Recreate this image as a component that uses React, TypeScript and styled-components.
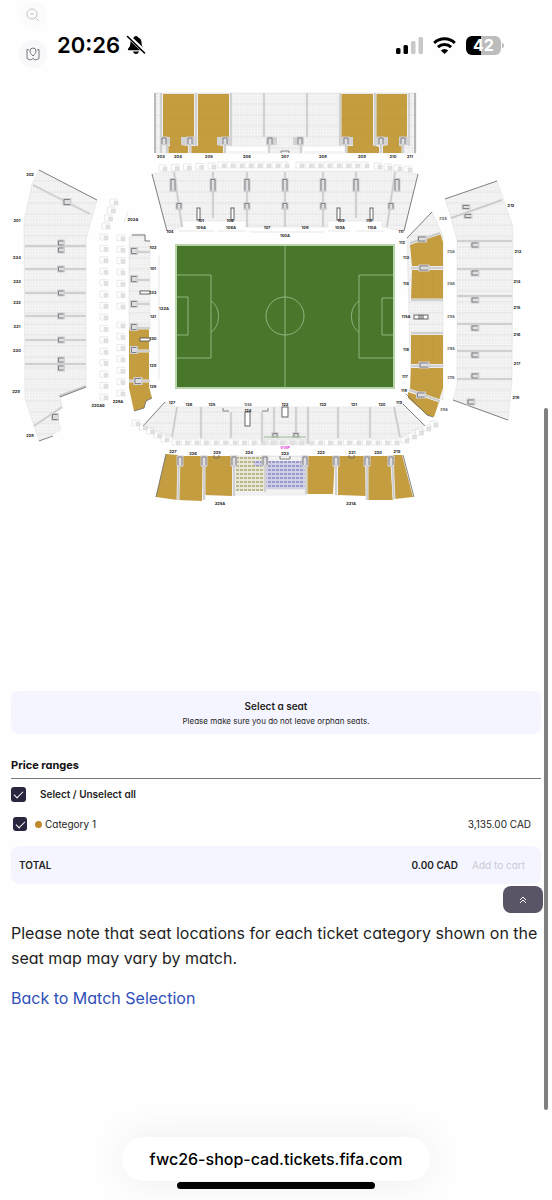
import React from "react";
import styled, { createGlobalStyle } from "styled-components";

const GlobalStyle = createGlobalStyle`
  * { box-sizing: border-box; }
  body {
    margin: 0;
    background: #fefefe;
    color: #1f1f24;
    font-family: Inter, "Liberation Sans", sans-serif;
    font-feature-settings: "cv11";
  }
`;

const Page = styled.div`
  min-height: 100vh;
  display: flex;
  flex-direction: column;
`;

const TopBar = styled.header`
  display: flex;
  align-items: flex-start;
  height: 80px;
  padding: 0 48px 0 19px;
`;

const MapTools = styled.div`
  display: flex;
  flex-direction: column;
  gap: 11px;
  width: 38px;
  padding-top: 1px;
`;

const ToolButton = styled.button<{ $faded?: boolean }>`
  display: grid;
  place-items: center;
  width: 28px;
  height: 28px;
  padding: 0;
  border: 0;
  border-radius: 50%;
  background: ${(p) => (p.$faded ? "#fbfbfb" : "#f8f8fb")};
  color: ${(p) => (p.$faded ? "#c4c4c6" : "#77777e")};
`;

const StatusBar = styled.div`
  flex: 1;
  display: flex;
  align-items: center;
  gap: 6px;
  padding-top: 31px;
  color: #000;
`;

const Clock = styled.time`
  font-size: 22px;
  line-height: 28px;
  font-weight: 600;
`;

const StatusIcons = styled.div`
  display: flex;
  align-items: center;
  gap: 10px;
  margin-left: auto;
`;

const Battery = styled.div`
  display: flex;
  align-items: center;
  gap: 1px;
`;

const BatteryBody = styled.div`
  width: 35px;
  height: 19px;
  border-radius: 6px;
  background: linear-gradient(90deg, #000 42%, #bcbcbc 42%);
  color: #fff;
  font-size: 16px;
  line-height: 19px;
  font-weight: 700;
  text-align: center;
`;

const BatteryTip = styled.div`
  width: 2px;
  height: 5px;
  border-radius: 0 2px 2px 0;
  background: #bcbcbc;
`;

const MapArea = styled.section`
  padding-bottom: 171px;
`;

const MapDrawing = styled.svg`
  display: block;
  width: 100%;
  height: auto;
  font-family: Inter, sans-serif;
  font-weight: 700;
  text-anchor: middle;
`;

const Content = styled.main`
  display: flex;
  flex-direction: column;
  padding: 0 11px;
`;

const Notice = styled.section`
  padding: 7px 12px 6px;
  border-radius: 8px;
  background: #f5f5ff;
  text-align: center;
`;

const NoticeTitle = styled.h2`
  margin: 0;
  font-size: 10px;
  line-height: 16px;
  font-weight: 600;
`;

const NoticeText = styled.p`
  margin: 0;
  font-size: 8px;
  line-height: 14px;
`;

const SectionTitle = styled.h2`
  margin: 22px 0 0;
  padding-bottom: 4px;
  border-bottom: 1px solid #77777a;
  font-size: 11px;
  line-height: 18px;
  font-weight: 700;
  color: #111;
`;

const OptionRow = styled.div<{ $nested?: boolean }>`
  display: flex;
  align-items: center;
  height: 30px;
  padding: ${(p) => (p.$nested ? "0 10px 0 2px" : "0")};
  font-size: 10px;
`;

const Check = styled.input<{ $size: number }>`
  appearance: none;
  flex: none;
  width: ${(p) => p.$size}px;
  height: ${(p) => p.$size}px;
  margin: 0;
  border-radius: 3px;
  background: #2b2640;
  display: grid;
  place-items: center;

  &:checked::after {
    content: "";
    width: 8px;
    height: 4px;
    border: solid #fff;
    border-width: 0 0 1px 1px;
    transform: translateY(-1px) rotate(-45deg);
  }
`;

const AllLabel = styled.label`
  margin-left: 14px;
  font-weight: 600;
`;

const CategoryLabel = styled.label`
  display: flex;
  align-items: center;
  gap: 3px;
  margin-left: 8px;
`;

const Dot = styled.span`
  width: 7px;
  height: 7px;
  border-radius: 50%;
  background: #bd8b2c;
`;

const Price = styled.span`
  margin-left: auto;
`;

const TotalBar = styled.section`
  display: flex;
  align-items: center;
  height: 38px;
  margin-top: 7px;
  padding: 0 16px 0 8px;
  border-radius: 8px;
  background: #f5f5ff;
  font-size: 10px;
  font-weight: 600;
`;

const CartButton = styled.button`
  margin-left: 14px;
  padding: 0;
  border: 0;
  background: none;
  font: inherit;
  font-feature-settings: inherit;
  font-weight: 400;
  color: #c9c9d4;
`;

const TopButton = styled.button`
  align-self: flex-end;
  display: grid;
  place-items: center;
  width: 40px;
  height: 27px;
  margin: 2px -2px 0 0;
  padding: 0;
  border: 0;
  border-radius: 8px;
  background: #595466;
  color: #fff;
`;

const Note = styled.p`
  margin: 8px 0 0;
  font-size: 16px;
  line-height: 25px;
`;

const BackLink = styled.a`
  align-self: flex-start;
  margin-top: 15px;
  font-size: 16px;
  line-height: 25px;
  color: #2f4fb8;
  text-decoration: none;
`;

const BrowserBar = styled.footer`
  display: flex;
  flex-direction: column;
  align-items: center;
  gap: 1px;
  margin-top: auto;
  padding-bottom: 11px;
`;

const Address = styled.div`
  padding: 0 28px;
  border-radius: 22px;
  background: #fff;
  box-shadow: 0 0 40px rgba(0, 0, 0, 0.07);
  font-size: 16px;
  line-height: 44px;
  font-weight: 500;
  font-feature-settings: normal;
  color: #000;
`;

const HomeIndicator = styled.div`
  position: relative;
  width: 198px;
  height: 7px;
  border-radius: 4px;
  background: #000;
`;

const ScrollThumb = styled.div`
  position: fixed;
  top: 34%;
  right: 4px;
  width: 4px;
  height: 58.5%;
  border-radius: 2px;
  background: #808080;
`;

const GOLD = "#c59d41";

type Point = [number, number];
type Box = [number, number, number, number];

/* Stands whose seats are not on sale. */
const emptyStands = [
  "155,93 416,93 416,153 155,153",
  "152,174 175,171 395,171 418,174 404,231 382,227 382,221 328,221 328,227 247,227 247,221 182,221 182,227 167,231",
  "39,170 97,200 89,228 86,240 86,386 60,397 62,406 55,411 61,430 39,441 25,398 24,222 26,212 32,184",
  "132,234 145,234 146,241 150,241 150,329 129,329 129,238",
  "407,238 432,212 443,236 443,400 411,390",
  "445,199 497,181 513,227 512,379 508,420 453,400 457,385 457,240 451,218",
  "144,425 165,402 177,407 394,407 403,404 425,425 400,438 307,438 307,444 262,444 262,438 172,438",
  "233,456 307,456 307,495 233,495",
];

const goldSections = [
  "163,94 194,94 194,137 181,137 181,145 188,146 188,153 168,153 168,146 170,146 170,137 163,137",
  "198,94 229,94 229,137 217,137 217,145 223,146 223,153 191,153 191,146 198,146",
  "341,94 373,94 373,145 379,147 379,153 347,153 347,146 353,146 353,137 341,137",
  "376,94 407,94 407,137 399,137 399,146 402,146 402,153 383,153 383,146 388,145 388,137 376,137",
  "129,329 149,329 149,387 152,398 146,401 144,408 134,411 129,388",
  "410,245 440,233 443,242 443,266 412,266",
  "412,270 443,270 443,299 411,299",
  "411,335 443,335 443,364 411,364",
  "411,368 443,368 443,388 439,400 410,389",
  "408,392 439,402 434,417 427,415 408,398",
  "166,454 178,455 177,500 156,497",
  "180,456 203,456 202,501 178,500",
  "205,456 232,456 232,496 205,495",
  "307,456 335,456 333,494 306,494",
  "338,456 365,456 366,496 338,495",
  "368,456 390,456 393,500 368,500",
  "393,455 402,455 413,497 395,499",
];

const aisles = [
  "M161 93V153M196 93V146M231 93V146M264 93V137M307 93V137M340 93V146M375 93V146M409 93V146",
  "M167 145V153M190 145V153M225 145V153M269 145V153M301 145V153M346 145V153M381 145V153M403 145V153",
  "M213 172V218M247 172V227M285 172V227M323 172V227M356 172V218M174 172L182 227M395 172L387 227",
  "M25 246H86M25 269H86M25 293H86M25 316H86M25 340H86M25 364H86M33 185L90 214M59 396L86 386M34 426L62 407",
  "M134 252H150M134 280H150M134 304H150M129 328H150M134 351H150M129 381H150",
  "M410 243L440 233M411 268H443M411 300H443M411 333H443M411 366H443M409 390L440 401",
  "M457 241H512M457 269H512M457 296H512M457 324H512M457 351H512M457 379H512M451 218L502 200",
  "M177 407L172 437M201 407V438M231 412V438M262 412V444M274 407V437M296 407V437M308 407V444M338 407V438M370 407V438M394 407L400 437",
  "M179 456L178 500M204 456V500M234 456V496M265 456V492M306 456V494M336 456V495M367 456V500M392 456L394 499",
];

const outlines = [
  "M155 93V153M415 93V153",
  "M152 174L167 231M418 174L404 231",
  "M39 170L97 200M39 441L53 436M60 397L86 387",
  "M132 235H145V241H150M134 411L144 408L146 401L152 398",
  "M407 238L432 212M406 394L427 415L433 417",
  "M445 199L497 181M453 400L508 420",
  "M143 426L165 402M403 404L425 426",
  "M166 454L156 497M403 455L414 497",
  "M223 408V411H229M268 408V411H262",
  "M280 456V459H290V456M214 455V458H219V455M349 455V458H354V455M281 153V151H289V153",
];

/* Stairways given by centre and size, grouped by the side their opening faces. */
const row = (xs: number[], y: number, w: number, h: number): Box[] => xs.map((x) => [x, y, w, h]);
const column = (x: number, ys: number[], w: number, h: number): Box[] => ys.map((y) => [x, y, w, h]);

const uprightStairs: Box[] = [
  ...row([164, 190, 225, 270, 300, 346, 381, 403], 141, 4, 6),
  ...row([173, 213, 247, 285, 323, 356, 397], 185, 4, 11),
  ...row([179, 247, 285, 323, 391], 206, 4, 5),
  ...row([275, 296], 435, 4, 3),
  ...row([180, 204, 234, 265, 305, 336, 367, 391], 461, 4, 8),
];

const sidewaysStairs: Box[] = [
  ...column(61, [243, 250, 269, 293, 316, 340, 360, 368], 5, 4),
  [67, 202, 6, 5],
  [55, 417, 5, 5],
  ...column(134, [251, 279, 304, 327, 350], 5, 5),
  [138, 381, 6, 5],
  [422, 239, 7, 4],
  [424, 268, 8, 4],
  [424, 365, 8, 4],
  [421, 395, 7, 4],
  ...column(475, [245, 273, 300, 328, 355, 376], 6, 4),
  [471, 402, 6, 4],
  [466, 207, 6, 3],
  [468, 216, 6, 3],
];

/* Grey landings beside the stairways of the top stand. */
const landings: Box[] = [
  [161, 137, 9, 8], [181, 137, 14, 8], [217, 137, 14, 8], [266, 137, 11, 8],
  [293, 137, 11, 8], [340, 137, 13, 8], [375, 137, 13, 8], [399, 137, 10, 8],
];

const slots: Box[] = [
  [197, 208, 3, 12], [231, 208, 3, 12], [337, 208, 3, 12], [370, 208, 3, 12],
  [140, 291, 10, 3], [140, 338, 10, 3], [245, 412, 5, 14], [282, 407, 6, 10], [414, 315, 14, 4],
];

const line = (n: number, from: Point, to: Point): Point[] =>
  Array.from({ length: n }, (_, i) => [
    from[0] + ((to[0] - from[0]) * i) / (n - 1),
    from[1] + ((to[1] - from[1]) * i) / (n - 1),
  ]);

/* Suites that ring the lower bowl. */
const suites: Point[] = [
  ...line(5, [163, 168], [212, 166]),
  ...line(8, [222, 165], [285, 165]),
  ...line(8, [300, 165], [365, 165]),
  ...line(4, [378, 166], [408, 169]),
  ...line(4, [114, 202], [106, 226]),
  ...line(15, [104, 237], [104, 397]),
  ...line(7, [121, 238], [121, 306]),
  ...line(7, [121, 325], [121, 393]),
  ...line(5, [136, 423], [165, 439]),
  ...line(24, [176, 442], [395, 442]),
  ...line(5, [405, 440], [434, 424]),
];

const labels: [string, number, number][] = [
  ["203", 161, 158], ["204", 178, 158], ["205", 209, 158], ["206", 247, 158], ["207", 285, 158],
  ["208", 323, 158], ["209", 362, 158], ["210", 393, 158], ["211", 410, 158],
  ["101", 201, 222], ["106", 230, 222], ["109", 341, 222], ["110", 369, 222],
  ["105A", 201, 229], ["106A", 231, 229], ["107", 267, 229], ["108", 305, 229], ["109A", 340, 229], ["110A", 372, 229],
  ["104", 170, 233], ["111", 401, 233], ["100A", 285, 237], ["112", 402, 244],
  ["202", 30, 176], ["201", 17, 222], ["234", 17, 259], ["233", 17, 283], ["232", 17, 304],
  ["231", 17, 328], ["230", 17, 352], ["229", 16, 393], ["228", 30, 437],
  ["203A", 133, 221], ["220Aa", 98, 407], ["228A", 118, 403],
  ["102", 153, 249], ["101", 153, 270], ["132", 153, 294], ["131", 153, 318], ["130", 153, 340],
  ["129", 153, 367], ["128", 153, 388], ["132A", 164, 310],
  ["113", 406, 259], ["114", 406, 285], ["115A", 406, 318], ["116", 406, 351], ["117", 405, 378], ["118", 404, 392],
  ["212", 511, 207], ["213", 518, 253], ["214", 517, 283], ["215", 517, 309], ["216", 517, 336], ["217", 517, 365], ["218", 516, 399],
  ["127", 172, 404], ["126", 189, 406], ["125", 212, 406], ["124", 248, 412], ["123", 285, 406],
  ["122", 323, 406], ["121", 354, 406], ["120", 382, 406], ["119", 399, 404],
  ["227", 173, 453], ["226", 193, 455], ["225", 217, 454], ["224", 249, 454], ["223", 285, 455],
  ["222", 321, 454], ["221", 352, 454], ["220", 378, 454], ["219", 397, 453],
  ["325A", 220, 505], ["321A", 351, 505],
];

const smallLabels: [string, number, number][] = [
  ["212A", 443, 220], ["213A", 451, 253], ["214A", 451, 285], ["215A", 451, 318],
  ["216A", 451, 350], ["217A", 451, 379], ["218A", 444, 411], ["124A", 248, 406],
];

const Stair = ({ box, sideways }: { box: Box; sideways?: boolean }) => {
  const [cx, cy, w, h] = box;
  const x = cx - w / 2;
  const y = cy - h / 2;
  const gate = sideways
    ? `M${x + w} ${y}H${x}V${y + h}H${x + w}`
    : `M${x} ${y + h}V${y}H${x + w}V${y + h}`;
  return (
    <g>
      <rect x={x - 1.5} y={y - 1.5} width={w + 3} height={h + 3} fill="#cfcfd1" />
      <path d={gate} fill="#dedee2" stroke="#77777a" strokeWidth="0.9" />
    </g>
  );
};

const Pitch = () => (
  <g fill="none" stroke="#8fb57f" strokeWidth="1">
    <rect x="176" y="245" width="218" height="143" fill="#48772b" stroke="#b9d5aa" strokeWidth="2" />
    <path d="M285 246V387M177 275H211V358H177M177 297H188V335H177M393 275H359V358H393M393 298H382V335H393" />
    <circle cx="285" cy="316" r="19" />
    <path d="M211 301C221 307 221 326 211 332M359 301C349 307 349 326 359 332" />
  </g>
);

const StadiumMap = () => (
  <MapDrawing viewBox="0 80 552 440" role="img" aria-label="Stadium seat map">
    <defs>
      <pattern id="seats" width="3" height="3" patternUnits="userSpaceOnUse">
        <rect width="3" height="3" fill="#f7f7f7" />
        <path d="M0 1H3M1 0V3" stroke="#e9e9e9" strokeWidth="0.7" />
      </pattern>
      <pattern id="rows" width="12" height="11" patternUnits="userSpaceOnUse">
        <path d="M0 5H12" stroke="#e0e0e0" strokeWidth="0.7" />
      </pattern>
      <pattern id="tan" width="4" height="4" patternUnits="userSpaceOnUse">
        <rect width="4" height="4" fill="#e9e8d6" />
        <rect y="1" width="3" height="2" fill="#b9b78b" />
      </pattern>
      <pattern id="violet" width="4" height="4" patternUnits="userSpaceOnUse">
        <rect width="4" height="4" fill="#cfcfe6" />
        <rect y="1" width="3" height="2" fill="#9b99c9" />
      </pattern>
    </defs>
    {emptyStands.map((points) => (
      <g key={points}>
        <polygon points={points} fill="url(#seats)" stroke="#dcdcdc" strokeWidth="0.5" />
        <polygon points={points} fill="url(#rows)" />
      </g>
    ))}
    <path d="M226 147H268V153H226ZM302 147H345V153H302Z" fill="#fff" />
    <path d="M228 152H266M304 152H343M178 231H214M218 231H246M250 232H324M328 231H350M356 231H384M159 255V380M124 222L128 212" fill="none" stroke="#dedede" strokeWidth="0.7" />
    {goldSections.map((points) => (
      <polygon key={points} points={points} fill={GOLD} />
    ))}
    <path d="M163 106H194M163 119H194M163 130H194M198 106H229M198 119H229M198 130H229M341 106H373M341 119H373M341 130H373M376 106H407M376 119H407M376 130H407M422 270V299M433 270V299M422 335V364M433 335V364" stroke="#b8903a" strokeWidth="0.5" opacity="0.6" />
    <rect x="236" y="457" width="28" height="34" fill="url(#tan)" />
    <rect x="266" y="461" width="39" height="28" fill="url(#violet)" />
    <rect x="254" y="461" width="8" height="5" fill="url(#violet)" />
    {aisles.map((d) => (
      <g key={d} fill="none">
        <path d={d} stroke="#e8e8e8" strokeWidth="3" />
        <path d={d} stroke="#c8c8c8" strokeWidth="1.4" />
      </g>
    ))}
    {landings.map(([x, y, w, h]) => (
      <rect key={x} x={x} y={y} width={w} height={h} fill="#d3d3d6" />
    ))}
    {outlines.map((d) => (
      <path key={d} d={d} fill="none" stroke="#666" strokeWidth="0.8" />
    ))}
    {suites.map(([x, y], i) => (
      <g key={i} fill="none" stroke="#d4d4d4" strokeWidth="0.5">
        <path d={`M${x + 4} ${y - 3}H${x - 4}V${y + 3}H${x - 1}`} />
        <rect x={x} y={y - 1} width="4" height="4" fill="#e2e2e2" />
      </g>
    ))}
    {uprightStairs.map((box) => (
      <Stair key={box.join()} box={box} />
    ))}
    {sidewaysStairs.map((box) => (
      <Stair key={box.join()} box={box} sideways />
    ))}
    {slots.map(([x, y, w, h]) => (
      <rect key={`${x}-${y}`} x={x} y={y} width={w} height={h} fill="#fff" stroke="#555" strokeWidth="0.9" />
    ))}
    <path d="M419 315V319M421 315V319M423 315V319" stroke="#555" strokeWidth="1" />
    <path d="M264 437H306" stroke="#83a878" strokeWidth="0.8" />
    <Pitch />
    {labels.map(([text, x, y]) => (
      <text key={`${text}-${x}-${y}`} x={x} y={y} fontSize="4" fill="#222">{text}</text>
    ))}
    {smallLabels.map(([text, x, y]) => (
      <text key={text} x={x} y={y} fontSize="3" fill="#444">{text}</text>
    ))}
    <text x="285" y="449" fontSize="4" fill="#e23be2">VVIP</text>
  </MapDrawing>
);

export default function App() {
  return (
    <>
      <GlobalStyle />
      <Page>
        <TopBar>
          <MapTools>
            <ToolButton $faded aria-label="Zoom out">
              <svg width="14" height="14" viewBox="0 0 14 14" fill="none" stroke="currentColor">
                <circle cx="6" cy="6" r="5" />
                <path d="M4 6H8M10 10L13 13" />
              </svg>
            </ToolButton>
            <ToolButton aria-label="Show map">
              <svg width="14" height="14" viewBox="0 0 14 14" fill="none" stroke="currentColor" strokeLinejoin="round">
                <path d="M3 3L1 2.500V11.500L4.500 13L7 11.500L9.500 13L13 11.500V2.500L11 3" />
                <path d="M7 9C5 7 4 6 4 4A3 3 0 0 1 10 4C10 6 9 7 7 9Z" />
              </svg>
            </ToolButton>
          </MapTools>
          <StatusBar>
            <Clock>20:26</Clock>
            <svg width="20" height="20" viewBox="0 0 20 20" role="img" aria-label="Silent mode">
              <path d="M10 1C8.600 1 8 1.800 7.900 2.600C5.600 3.400 4.500 5.500 4.400 8C4.300 11 3.600 12 2.400 13.200C1.600 14 1.800 15.300 3 15.300H17C18.200 15.300 18.400 14 17.600 13.200C16.400 12 15.700 11 15.600 8C15.500 5.500 14.400 3.400 12.100 2.600C12 1.800 11.400 1 10 1Z" />
              <path d="M7 16.600H13C12.600 18.300 11.500 19 10 19C8.500 19 7.400 18.300 7 16.600Z" />
              <path d="M1.500 0.500L19.500 17.500" stroke="#fefefe" strokeWidth="4" />
              <path d="M1.500 1.500L18.500 18" stroke="#000" strokeWidth="1.600" strokeLinecap="round" />
            </svg>
            <StatusIcons>
              <svg width="27" height="17" viewBox="0 0 27 17" role="img" aria-label="Signal">
                <rect x="0" y="11" width="4.500" height="6" rx="1.500" />
                <rect x="7.500" y="8" width="4.500" height="9" rx="1.500" />
                <rect x="15" y="4" width="4.500" height="13" rx="1.500" fill="#c8c8c8" />
                <rect x="22.500" y="0" width="4.500" height="17" rx="1.500" fill="#c8c8c8" />
              </svg>
              <svg width="23" height="17" viewBox="0 0 23 17" fill="none" stroke="#000" strokeWidth="3" role="img" aria-label="Wi-Fi">
                <path d="M1.200 6A14.800 14.800 0 0 1 21.800 6" />
                <path d="M4.900 10.200A9.500 9.500 0 0 1 18.100 10.200" />
                <path d="M11.500 17L7.800 13.400A5.300 5.300 0 0 1 15.200 13.400Z" fill="#000" stroke="none" />
              </svg>
              <Battery>
                <BatteryBody>42</BatteryBody>
                <BatteryTip />
              </Battery>
            </StatusIcons>
          </StatusBar>
        </TopBar>
        <MapArea>
          <StadiumMap />
        </MapArea>
        <Content>
          <Notice>
            <NoticeTitle>Select a seat</NoticeTitle>
            <NoticeText>Please make sure you do not leave orphan seats.</NoticeText>
          </Notice>
          <SectionTitle>Price ranges</SectionTitle>
          <OptionRow>
            <Check type="checkbox" id="all" $size={15} defaultChecked />
            <AllLabel htmlFor="all">Select / Unselect all</AllLabel>
          </OptionRow>
          <OptionRow $nested>
            <Check type="checkbox" id="category-1" $size={14} defaultChecked />
            <CategoryLabel htmlFor="category-1">
              <Dot />
              Category 1
            </CategoryLabel>
            <Price>3,135.00 CAD</Price>
          </OptionRow>
          <TotalBar>
            <span>TOTAL</span>
            <Price>0.00 CAD</Price>
            <CartButton disabled>Add to cart</CartButton>
          </TotalBar>
          <TopButton aria-label="Scroll to top">
            <svg width="8" height="8" viewBox="0 0 8 8" fill="none" stroke="currentColor">
              <path d="M1 4L4 1L7 4M1 7L4 4L7 7" />
            </svg>
          </TopButton>
          <Note>Please note that seat locations for each ticket category shown on the seat map may vary by match.</Note>
          <BackLink href="#matches">Back to Match Selection</BackLink>
        </Content>
        <BrowserBar>
          <Address>fwc26-shop-cad.tickets.fifa.com</Address>
          <HomeIndicator />
        </BrowserBar>
      </Page>
      <ScrollThumb />
    </>
  );
}
